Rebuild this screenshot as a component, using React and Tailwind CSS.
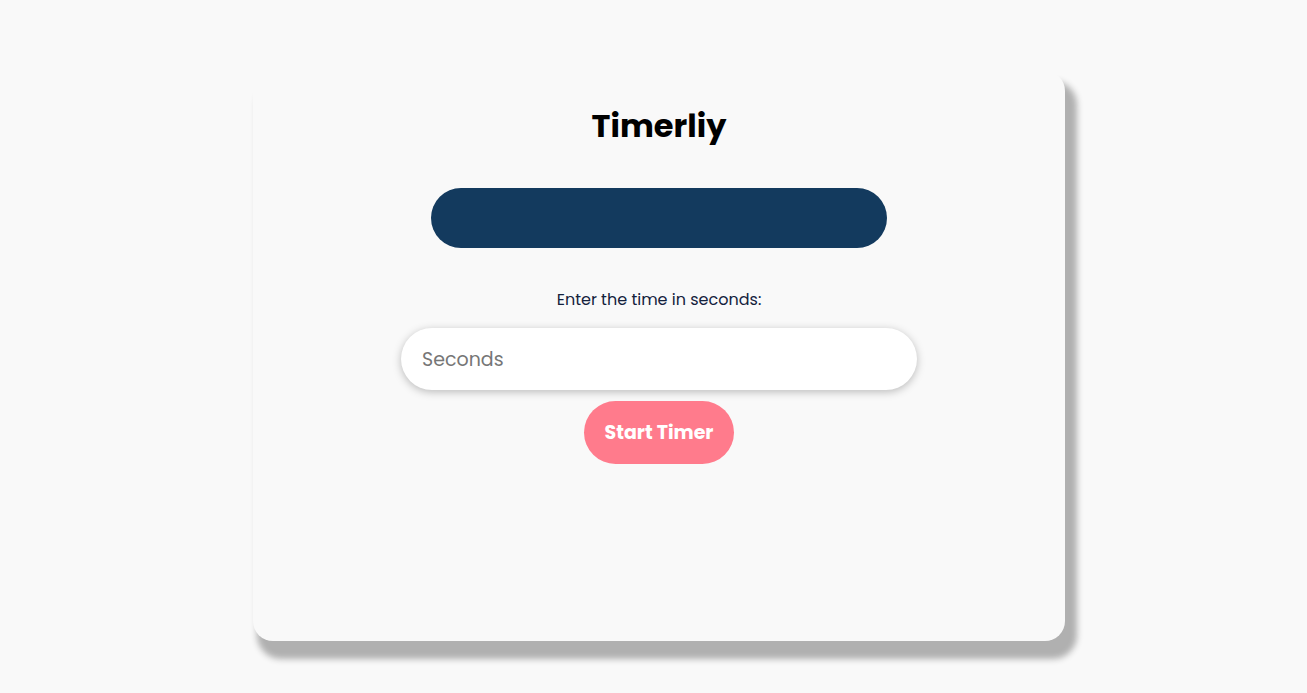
import React, { useState } from 'react';

const App = () => {
  const [seconds, setSeconds] = useState('');

  return (
    <div className="min-h-screen bg-[#f9f9f9] pt-[71px] pb-[50px] font-['Poppins','Inter','Noto_Sans',sans-serif]">
      {/* Card */}
      <div className="ml-[253px] w-[812px] h-[570px] rounded-[20px] bg-[#f9f9f9] shadow-[8px_14px_6px_4px_#b0b0b0] flex flex-col items-center">
        <h1 className="mt-[36px] text-[32px] leading-[38px] font-bold text-black">Timerliy</h1>

        {/* Time display */}
        <div className="mt-[43px] w-[456px] h-[60px] rounded-full bg-[#133a5e]"></div>

        <p className="mt-[40px] text-[16px] leading-[24px] text-[#14223d]">Enter the time in seconds:</p>

        <input
          type="number"
          value={seconds}
          onChange={(e) => setSeconds(e.target.value)}
          placeholder="Seconds"
          className="mt-[16px] w-[516px] h-[62px] rounded-full bg-white px-[21px] text-[19px] text-gray-700 placeholder:text-[#767676] outline-none shadow-[0_2px_8px_rgba(0,0,0,0.25)]"
        />

        <button className="mt-[11px] w-[150px] h-[63px] pt-[2px] rounded-full bg-[#ff7b8c] text-white text-[19px] font-bold">
          Start Timer
        </button>
      </div>
    </div>
  );
};

export default App;
